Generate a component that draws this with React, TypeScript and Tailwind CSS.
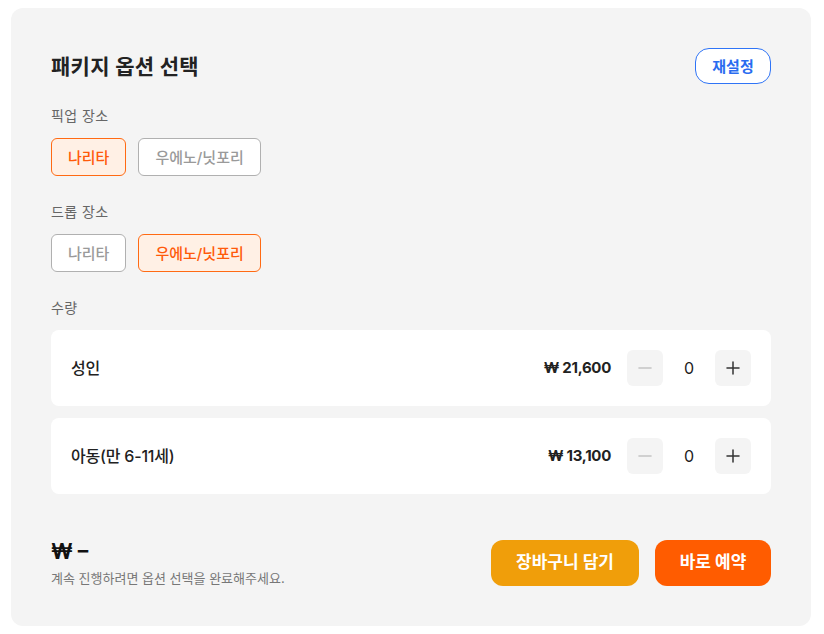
import React from "react";

const font = { fontFamily: "Inter, 'Noto Sans CJK KR', sans-serif" };

function Chip({ label, active }: { label: string; active?: boolean }) {
  return (
    <button
      className={
        active
          ? "h-[38px] px-4 rounded-md border border-[#ff6a13] bg-[#fff0e5] text-[#ff5a0a] text-[15px] font-medium leading-none"
          : "h-[38px] px-4 rounded-md border border-[#b0b0b0] bg-white text-[#9a9a9a] text-[15px] font-medium leading-none"
      }
    >
      {label}
    </button>
  );
}

function Minus() {
  return (
    <svg width="16" height="16" viewBox="0 0 16 16" fill="none">
      <path d="M2 8h12" stroke="#c4c4c4" strokeWidth="1.6" strokeLinecap="round" />
    </svg>
  );
}
function Plus() {
  return (
    <svg width="16" height="16" viewBox="0 0 16 16" fill="none">
      <path d="M2 8h12M8 2v12" stroke="#333" strokeWidth="1.5" strokeLinecap="round" />
    </svg>
  );
}

function QtyRow({ name, price }: { name: string; price: string }) {
  return (
    <div className="h-[76px] bg-white rounded-lg flex items-center px-5">
      <div className="flex-1 text-[16px] font-medium text-[#222] tracking-[-0.2px]">{name}</div>
      <div className="text-[15px] font-bold text-[#222] tracking-[-0.3px]">{price}</div>
      <div className="flex items-center gap-3 ml-4">
        <button className="w-9 h-9 rounded-md bg-[#f4f4f4] flex items-center justify-center">
          <Minus />
        </button>
        <div className="w-7 text-center text-[16px] text-[#222]">0</div>
        <button className="w-9 h-9 rounded-md bg-[#f4f4f4] flex items-center justify-center">
          <Plus />
        </button>
      </div>
    </div>
  );
}

export default function App() {
  return (
    <div className="w-[824px] h-[634px] bg-white pt-2 pl-[11px]" style={font}>
      <div className="w-[800px] h-[618px] bg-[#f4f4f4] rounded-xl px-10 pt-10 flex flex-col">
        <div className="flex items-center justify-between h-9">
          <h1 className="text-[21px] font-bold text-[#222] leading-none tracking-[0.3px]">패키지 옵션 선택</h1>
          <button className="w-[76px] h-9 rounded-[14px] border border-[#2f74f6] bg-white text-[#2a6cf0] text-[15px] font-semibold leading-none">
            재설정
          </button>
        </div>

        <div className="mt-[22px] text-[14px] leading-5 text-[#666] tracking-[0.4px]">픽업 장소</div>
        <div className="mt-3 flex gap-3">
          <Chip label="나리타" active />
          <Chip label="우에노/닛포리" />
        </div>

        <div className="mt-[26px] text-[14px] leading-5 text-[#666] tracking-[0.4px]">드롭 장소</div>
        <div className="mt-3 flex gap-3">
          <Chip label="나리타" />
          <Chip label="우에노/닛포리" active />
        </div>

        <div className="mt-[26px] text-[14px] leading-5 text-[#666] tracking-[0.4px]">수량</div>
        <div className="mt-3 flex flex-col gap-3">
          <QtyRow name="성인" price="₩ 21,600" />
          <QtyRow name="아동(만 6-11세)" price="₩ 13,100" />
        </div>

        <div className="mt-[46px] flex items-center justify-between">
          <div className="flex flex-col">
            <div className="text-[21px] font-bold text-[#111] leading-6">₩ –</div>
            <div className="mt-[6px] text-[13px] text-[#777] leading-4">계속 진행하려면 옵션 선택을 완료해주세요.</div>
          </div>
          <div className="flex gap-4">
            <button className="w-[148px] h-[46px] rounded-xl bg-[#f09e0a] text-white text-[17px] font-bold">
              장바구니 담기
            </button>
            <button className="w-[116px] h-[46px] rounded-xl bg-[#ff5c00] text-white text-[17px] font-bold">
              바로 예약
            </button>
          </div>
        </div>
      </div>
    </div>
  );
}
